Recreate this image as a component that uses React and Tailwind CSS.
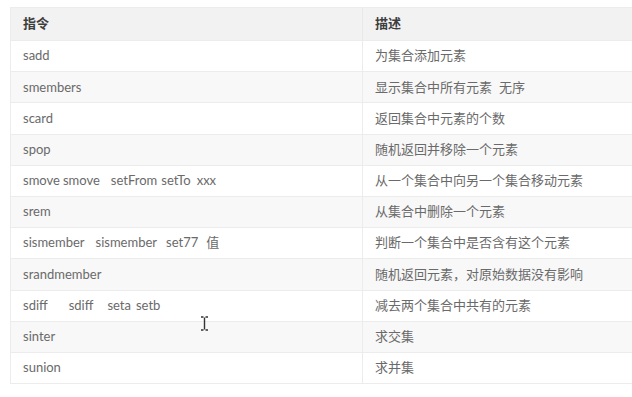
const rows = [
  { cmd: [['sadd', 0]], desc: [['为集合添加元素', 0]] },
  { cmd: [['smembers', 0]], desc: [['显示集合中所有元素', 0], ['无序', 7]] },
  { cmd: [['scard', 0]], desc: [['返回集合中元素的个数', 0]] },
  { cmd: [['spop', 0]], desc: [['随机返回并移除一个元素', 0]] },
  {
    cmd: [['smove', 0], ['smove', 3], ['setFrom', 11], ['setTo', 4], ['xxx', 6]],
    desc: [['从一个集合中向另一个集合移动元素', 0]],
  },
  { cmd: [['srem', 0]], desc: [['从集合中删除一个元素', 0]] },
  {
    cmd: [['sismember', 0], ['sismember', 11], ['set77', 9], ['值', 8]],
    desc: [['判断一个集合中是否含有这个元素', 0]],
  },
  { cmd: [['srandmember', 0]], desc: [['随机返回元素，对原始数据没有影响', 0]] },
  {
    cmd: [['sdiff', 0], ['sdiff', 21], ['seta', 14], ['setb', 5]],
    desc: [['减去两个集合中共有的元素', 0]],
  },
  { cmd: [['sinter', 0]], desc: [['求交集', 0]] },
  { cmd: [['sunion', 0]], desc: [['求并集', 0]] },
];

const Words = ({ parts }) => (
  <span className="flex items-center">
    {parts.map(([text, gap], i) => (
      <span key={i} style={{ marginLeft: gap }}>
        {text}
      </span>
    ))}
  </span>
);

export default function App() {
  return (
    <div
      className="relative h-[397px] w-[632px] overflow-hidden bg-white pl-[10px] pt-[7px]"
      style={{ fontFamily: 'Lato, "Noto Sans CJK SC", sans-serif' }}
    >
      <div className="w-[660px] border border-[#ececec] text-[13px] text-[#6a6a6a]">
        <div className="flex h-[32px] bg-[#f2f2f2] font-bold text-[#3d3d3d]">
          <div className="flex w-[352px] items-center border-r border-[#e8e8e8] pl-[12px]">指令</div>
          <div className="flex flex-1 items-center pl-[12px]">描述</div>
        </div>
        {rows.map((row, i) => (
          <div
            key={i}
            className={`flex h-[31.2px] border-t border-[#ececec] ${i % 2 === 1 ? 'bg-[#f8f8f8]' : 'bg-white'}`}
          >
            <div className="flex w-[352px] items-center border-r border-[#ececec] pl-[12px]">
              <Words parts={row.cmd} />
            </div>
            <div className="flex flex-1 items-center pl-[12px]">
              <Words parts={row.desc} />
            </div>
          </div>
        ))}
      </div>

      <svg className="absolute left-[200px] top-[316px]" width="9" height="15" viewBox="0 0 9 15">
        <path d="M1 1h2.5M5.5 1H8M4.5 1.5v12M1 14h2.5M5.5 14H8" stroke="#333" strokeWidth="1.4" fill="none" />
      </svg>
    </div>
  );
}
